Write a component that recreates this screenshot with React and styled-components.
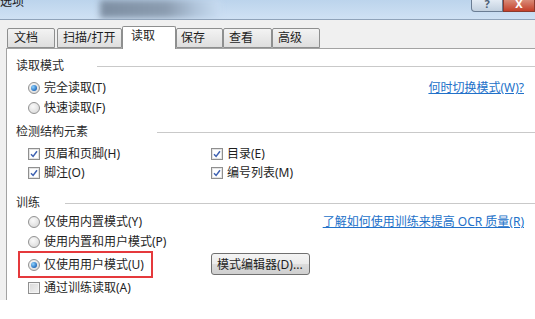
import styled, { createGlobalStyle } from "styled-components";

const Global = createGlobalStyle`
  html, body { margin: 0; padding: 0; background: #fff; }
  body {
    font-family: "Noto Sans", "Noto Sans CJK SC", sans-serif;
    font-size: 12px;
    color: #1e1e1e;
  }
`;

const Window = styled.div`
  width: 535px;
  height: 300px;
  overflow: hidden;
  display: flex;
  flex-direction: column;
  background: #f0f0f0;
`;

const TitleBar = styled.div`
  height: 19px;
  flex: none;
  display: flex;
  align-items: flex-start;
  background: linear-gradient(#bcd4ec, #cfe1f4);
  border-bottom: 1px solid #8fa3ba;
  overflow: hidden;
`;

const Title = styled.span`
  margin-top: -6px;
  line-height: 16px;
  font-size: 12px;
  color: #1b1b1b;
`;

const Blur = styled.div`
  margin-left: 76px;
  width: 120px;
  height: 18px;
  background: linear-gradient(90deg, #7e8fa3 0%, #8b9cb0 55%, #b1c5db 80%, #c8dcf1 100%);
  filter: blur(3px);
`;

const CaptionButtons = styled.div`
  margin-left: auto;
  display: flex;
`;

const CapBtn = styled.div`
  width: 30px;
  height: 11px;
  border: 1px solid ${p => (p.$close ? "#8c3a2e" : "#6a7d94")};
  border-top: none;
  border-radius: ${p => (p.$close ? "0" : "0 0 0 4px")};
  background: ${p =>
    p.$close
      ? "linear-gradient(#d98b78, #c4402a)"
      : "linear-gradient(#e3ebf4, #c2d0df)"};
  color: ${p => (p.$close ? "#fff" : "#4c5e74")};
  font-size: 11px;
  font-weight: bold;
  line-height: 8px;
  text-align: center;
  overflow: hidden;
`;

const TabStrip = styled.div`
  height: 28px;
  flex: none;
  display: flex;
  align-items: flex-end;
  padding-left: 7px;
  position: relative;
  z-index: 1;
`;

const Tab = styled.div`
  width: ${p => p.$w}px;
  height: ${p => (p.$active ? 23 : 20)}px;
  margin-left: ${p => p.$ml || 0}px;
  margin-bottom: ${p => (p.$active ? -1 : 0)}px;
  box-sizing: border-box;
  border: 1px solid #8e8f8f;
  border-bottom: ${p => (p.$active ? "none" : "1px solid #8e8f8f")};
  border-radius: 2px 2px 0 0;
  background: ${p => (p.$active ? "#fff" : "linear-gradient(#f3f3f3, #dedede)")};
  padding-left: ${p => p.$pl}px;
  line-height: ${p => (p.$active ? 18 : 18)}px;
  font-size: 12px;
  color: #1e1e1e;
`;

const Panel = styled.div`
  flex: 1;
  margin-left: 6px;
  background: #fff;
  border-left: 1px solid #a3a3a3;
  border-top: 1px solid #a3a3a3;
  padding: 9px 0 0 9px;
  display: flex;
  flex-direction: column;
`;

const Section = styled.div`
  margin-top: ${p => p.$top}px;
  display: flex;
  flex-direction: column;
`;

const Heading = styled.div`
  height: 16px;
  display: flex;
  align-items: center;
  gap: ${p => p.$gap}px;
  line-height: 16px;
  color: #2b2b2b;
  &::after {
    content: "";
    flex: 1;
    height: 1px;
    background: #c9c9c9;
  }
`;

const Rows = styled.div`
  margin-top: ${p => p.$top}px;
  padding-left: 12px;
  display: flex;
  flex-direction: column;
`;

const Row = styled.div`
  height: 20px;
  margin-top: ${p => p.$top || 0}px;
  display: grid;
  grid-template-columns: 183px 1fr;
  align-items: center;
`;

const Option = styled.label`
  display: flex;
  align-items: center;
  gap: 4px;
  line-height: 16px;
  white-space: nowrap;
`;

const Radio = styled.span`
  width: 12px;
  height: 12px;
  box-sizing: border-box;
  border-radius: 50%;
  border: 1px solid #929292;
  background: radial-gradient(circle at 40% 35%, #fafafa, #d4d4d4);
  display: flex;
  align-items: center;
  justify-content: center;
  &::after {
    content: "";
    display: ${p => (p.$on ? "block" : "none")};
    width: 6px;
    height: 6px;
    border-radius: 50%;
    background: radial-gradient(circle at 35% 35%, #8fd3ff, #1d66b8 75%);
  }
`;

const Box = styled.span`
  width: 12px;
  height: 12px;
  box-sizing: border-box;
  border: 1px solid #8f8f8f;
  background: ${p => (p.$on ? "#fff" : "linear-gradient(135deg, #d8d8d8, #f2f2f2)")};
  box-shadow: inset 0 0 0 1px ${p => (p.$on ? "#e4e4e4" : "#f4f4f4")};
  display: flex;
  align-items: center;
  justify-content: center;
`;

const Link = styled.a`
  justify-self: end;
  margin-right: 11px;
  color: #2271c9;
  text-decoration: underline;
  line-height: 16px;
  white-space: nowrap;
`;

const Highlight = styled.div`
  height: 27px;
  margin-left: -10px;
  margin-top: -1px;
  width: 135px;
  box-sizing: border-box;
  border: 2px solid #e5393c;
  padding-left: 8px;
  display: flex;
  align-items: center;
`;

const Button = styled.button`
  justify-self: start;
  height: 22px;
  width: 99px;
  margin-top: -2px;
  padding: 0 5px;
  border: 1px solid #707070;
  border-radius: 3px;
  background: linear-gradient(#f4f4f4 0%, #ebebeb 50%, #dcdcdc 51%, #cfcfcf 100%);
  font-family: inherit;
  font-size: 12px;
  color: #1e1e1e;
  text-align: left;
  white-space: nowrap;
`;

const Check = () => (
  <svg width="8" height="8" viewBox="0 0 8 8">
    <path d="M1 4.2 L3.1 6.4 L7 1.2" fill="none" stroke="#3f62b2" strokeWidth="1.5" />
  </svg>
);

const tabs = [
  { t: "文档", w: 48, pl: 6 },
  { t: "扫描/打开", w: 65, pl: 5, ml: 2 },
  { t: "读取", w: 54, pl: 8, active: true },
  { t: "保存", w: 47, pl: 4 },
  { t: "查看", w: 49, pl: 5 },
  { t: "高级", w: 48, pl: 5 },
];

export default function App() {
  return (
    <>
      <Global />
      <Window>
        <TitleBar>
          <Title>选项</Title>
          <Blur />
          <CaptionButtons>
            <CapBtn>?</CapBtn>
            <CapBtn $close>X</CapBtn>
          </CaptionButtons>
        </TitleBar>
        <TabStrip>
          {tabs.map(tab => (
            <Tab key={tab.t} $w={tab.w} $pl={tab.pl} $ml={tab.ml} $active={tab.active}>
              {tab.t}
            </Tab>
          ))}
        </TabStrip>
        <Panel>
          <Section $top={0}>
            <Heading $gap={33}>读取模式</Heading>
            <Rows $top={4}>
              <Row>
                <Option><Radio $on />完全读取(T)</Option>
                <Link>何时切换模式(W)?</Link>
              </Row>
              <Row>
                <Option><Radio />快速读取(F)</Option>
              </Row>
            </Rows>
          </Section>
          <Section $top={6}>
            <Heading $gap={69}>检测结构元素</Heading>
            <Rows $top={4}>
              <Row>
                <Option><Box $on><Check /></Box>页眉和页脚(H)</Option>
                <Option><Box $on><Check /></Box>目录(E)</Option>
              </Row>
              <Row $top={-1}>
                <Option><Box $on><Check /></Box>脚注(O)</Option>
                <Option><Box $on><Check /></Box>编号列表(M)</Option>
              </Row>
            </Rows>
          </Section>
          <Section $top={12}>
            <Heading $gap={25}>训练</Heading>
            <Rows $top={1}>
              <Row>
                <Option><Radio />仅使用内置模式(Y)</Option>
                <Link>了解如何使用训练来提高 OCR 质量(R)</Link>
              </Row>
              <Row>
                <Option><Radio />使用内置和用户模式(P)</Option>
              </Row>
              <Row>
                <Highlight>
                  <Option><Radio $on />仅使用用户模式(U)</Option>
                </Highlight>
                <Button>模式编辑器(D)...</Button>
              </Row>
              <Row $top={6}>
                <Option><Box />通过训练读取(A)</Option>
              </Row>
            </Rows>
          </Section>
        </Panel>
      </Window>
    </>
  );
}
